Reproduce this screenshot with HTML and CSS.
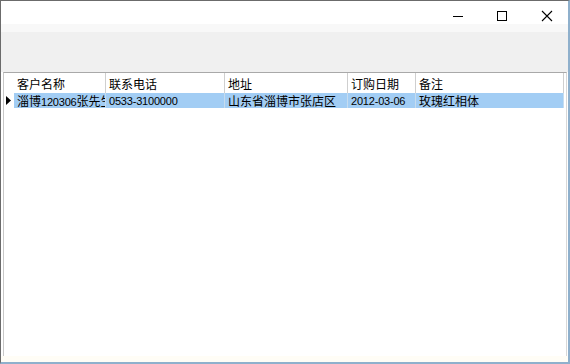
FILE: index.html
```html
<!DOCTYPE html>
<html>
<head>
<meta charset="utf-8">
<link rel="stylesheet" href="styles.css">
</head>
<body>
<div class="window">
  <div class="titlebar">
    <div class="title-space"></div>
    <div class="ctl ctl-min"><svg width="12" height="12" viewBox="0 0 12 12"><path d="M1 6.5H11" stroke="#000" stroke-width="1"/></svg></div>
    <div class="ctl ctl-max"><svg width="12" height="12" viewBox="0 0 12 12"><rect x="1.5" y="1.5" width="9" height="9" fill="none" stroke="#000" stroke-width="1"/></svg></div>
    <div class="ctl ctl-close"><svg width="12" height="12" viewBox="0 0 12 12"><path d="M1 1L11 11M11 1L1 11" stroke="#000" stroke-width="1.1"/></svg></div>
  </div>
  <div class="band"></div>
  <div class="toolbar"></div>
  <div class="grid">
    <div class="row header">
      <div class="rowhead"></div>
      <div class="cell c1">客户名称</div>
      <div class="cell c2">联系电话</div>
      <div class="cell c3">地址</div>
      <div class="cell c4">订购日期</div>
      <div class="cell c5">备注</div>
    </div>
    <div class="row data">
      <div class="rowhead"><svg width="6" height="9" viewBox="0 0 6 9"><path d="M0 0L5 4.5L0 9Z" fill="#000"/></svg></div>
      <div class="cell c1"><span class="clip">淄博<span class="num">120306</span>张先生</span></div>
      <div class="cell c2 num">0533-3100000</div>
      <div class="cell c3">山东省淄博市张店区</div>
      <div class="cell c4 num">2012-03-06</div>
      <div class="cell c5">玫瑰红相体</div>
    </div>
  </div>
  <div class="footer"></div>
</div>
</body>
</html>
```
FILE: styles.css
```css
html, body {
  margin: 0;
  padding: 0;
  background: #ffffff;
}
.window {
  width: 570px;
  height: 364px;
  box-sizing: border-box;
  border-top: 1px solid #6b6b6b;
  border-left: 1px solid #6b6b6b;
  border-right: 2px solid #8fb0cc;
  border-bottom: 2px solid #8fb0cc;
  display: flex;
  flex-direction: column;
  font-family: "Liberation Sans", "Noto Sans CJK SC", sans-serif;
  font-size: 12px;
  color: #000;
  overflow: hidden;
}
.titlebar {
  height: 23px;
  display: flex;
  align-items: flex-start;
  background: #fff;
}
.title-space {
  flex: 1;
}
.ctl {
  width: 12px;
  height: 12px;
  margin-top: 9px;
}
.ctl svg {
  display: block;
}
.ctl-min {
  margin-right: 32px;
}
.ctl-max {
  margin-right: 33px;
}
.ctl-close {
  margin-right: 15px;
}
.band {
  height: 8px;
  background: #f8f8f8;
}
.toolbar {
  height: 40px;
  background: #f0f0f0;
}
.grid {
  flex: 1;
  margin-left: 2px;
  margin-right: 1px;
  border-top: 1px solid #a9a9a9;
  border-left: 1px solid #c8c8c8;
  border-right: 1px solid #d8d8d8;
  background: #fff;
}
.row {
  display: flex;
}
.header {
  height: 20px;
  align-items: center;
}
.data {
  height: 15px;
  align-items: center;
}
.rowhead {
  width: 10px;
  height: 100%;
  display: flex;
  align-items: center;
  padding-left: 2px;
  box-sizing: border-box;
}
.rowhead svg {
  display: block;
}
.cell {
  height: 100%;
  display: flex;
  align-items: center;
  white-space: nowrap;
  overflow: hidden;
  box-sizing: border-box;
  padding-left: 3px;
  border-right: 1px solid #e4e4e4;
}
.header .cell {
  border-right: 1px solid #cfcfcf;
}
.data .cell {
  background: #a2cdf4;
  border-right: 1px solid #c6dcef;
}
.clip {
  display: block;
  overflow: hidden;
  white-space: nowrap;
  max-width: 100%;
}
.c1 { width: 92px; }
.c2 { width: 119px; }
.c3 { width: 123px; }
.c4 { width: 68px; }
.c5 { width: 148px; }
.num {
  font-size: 11px;
  letter-spacing: -0.2px;
}
.footer {
  height: 6px;
  background: #fffdf6;
}
```
